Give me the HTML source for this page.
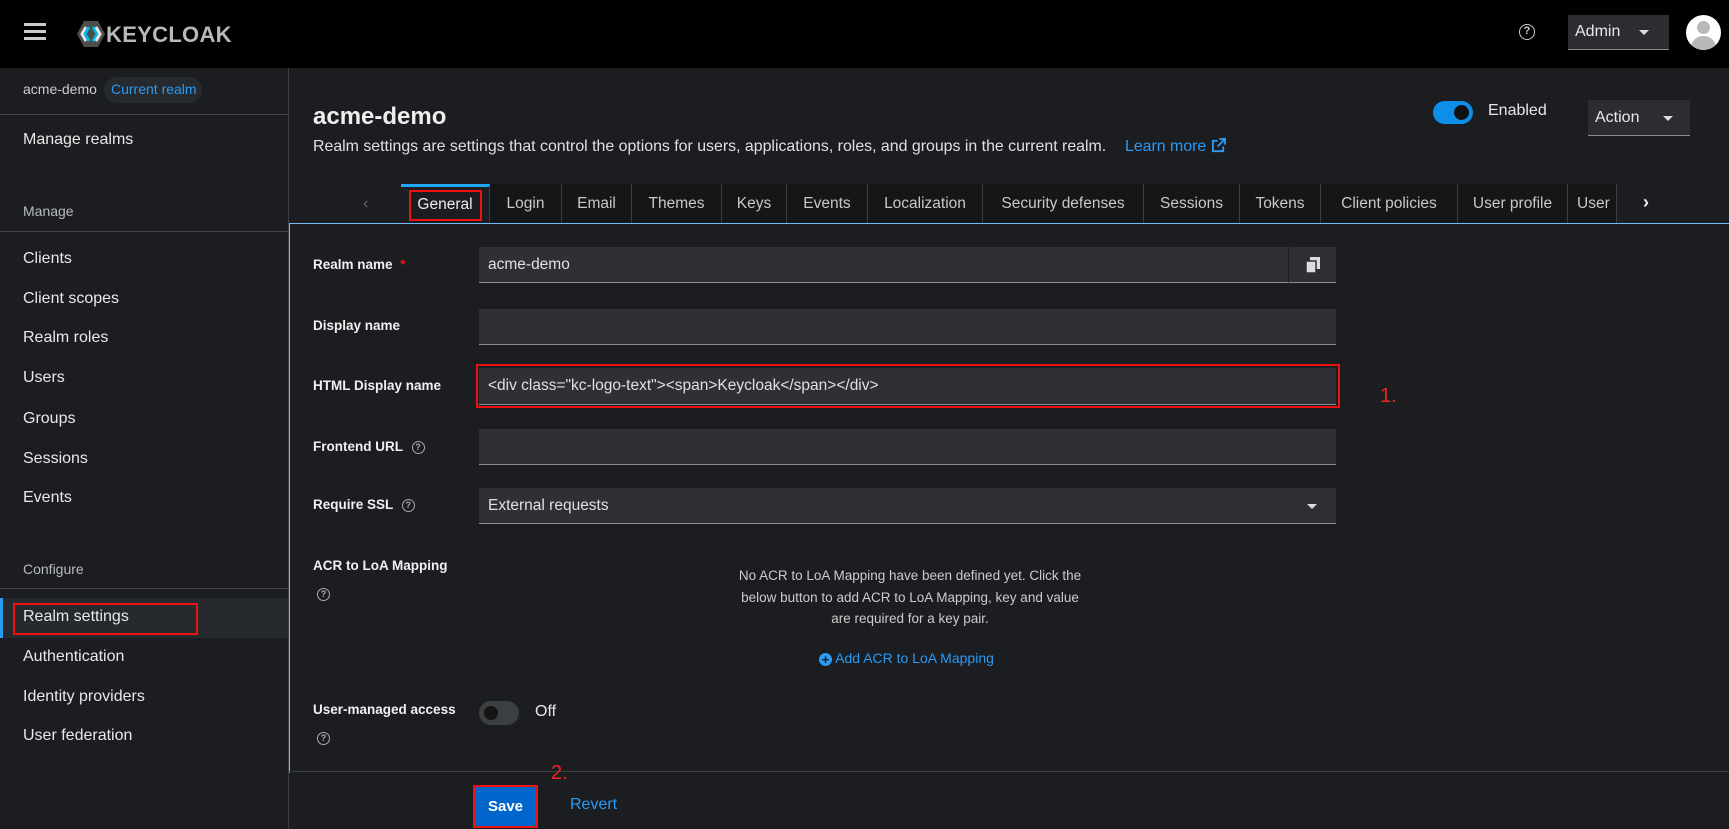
<!DOCTYPE html>
<html><head><meta charset="utf-8"><style>
*{box-sizing:border-box;margin:0;padding:0}
body{width:1729px;height:829px;overflow:hidden;background:#1b1d21;font-family:"Liberation Sans",sans-serif;color:#e0e0e0;position:relative;font-size:15px}
.a{position:absolute;white-space:nowrap}
.hdr{left:0;top:0;width:1729px;height:68px;background:#000}
.side{left:0;top:68px;width:289px;height:761px;background:#1b1d21;border-right:1px solid #3c3f42}
.nav{left:23px;font-size:16px;color:#e8e8e8}
.sec{left:23px;font-size:14px;color:#b8bbbe}
.hr{left:0;width:289px;height:1px;background:#44474b}
.lbl{left:313px;font-size:13.5px;font-weight:bold;color:#f0f0f0}
.inp{left:479px;width:857px;background:#2e3035;border-bottom:1px solid #8a8d90;font-size:15.5px;color:#e0e0e0;padding-left:9px;display:flex;align-items:center}
.tab{top:184px;height:39px;border-right:1px solid #3c3f42;background:#151618;font-size:15.5px;color:#c8c8c8;display:flex;align-items:center;justify-content:center}
.q{display:inline-block;width:13px;height:13px;border:1.5px solid #aaa;border-radius:50%;font-size:9px;line-height:10px;text-align:center;color:#aaa;font-weight:bold;vertical-align:middle}
</style></head><body>
<div class="a hdr"></div>
<div class="a" style="left:24px;top:23px;width:22px;height:3px;background:#ccc;box-shadow:0 7px 0 #ccc,0 14px 0 #ccc"></div>
<svg class="a" style="left:76px;top:20px" width="30" height="28" viewBox="0 0 30 28"><polygon points="8,1 22,1 29,14 22,27 8,27 1,14" fill="#4d4d4d"/><path d="M10 7 L6 14 L10 21" stroke="#e6e6e6" stroke-width="3" fill="none"/><path d="M13 7 L9 14 L13 21" stroke="#00b8e3" stroke-width="3" fill="none"/><path d="M17 7 L21 14 L17 21" stroke="#00b8e3" stroke-width="3" fill="none"/><path d="M20 7 L24 14 L20 21" stroke="#e6e6e6" stroke-width="3" fill="none"/></svg>
<div class="a" style="left:106px;top:22px;font-size:22px;font-weight:bold;color:#b8b8b8;letter-spacing:0.3px">KEYCLOAK</div>
<div class="a" style="left:1519px;top:24px;width:16px;height:16px;border:1.5px solid #ccc;border-radius:50%;font-size:11px;text-align:center;line-height:13px;color:#ccc;font-weight:bold">?</div>
<div class="a" style="left:1568px;top:15px;width:101px;height:35px;background:#2b2d31;border-bottom:1px solid #8a8d90;font-size:16px;color:#e8e8e8;padding:8px 0 0 7px">Admin<span style="position:absolute;left:71px;top:15px;border:5px solid transparent;border-top-color:#ddd"></span></div>
<div class="a" style="left:1686px;top:15px;width:35px;height:35px;border-radius:50%;background:#fff;overflow:hidden"><div style="position:absolute;left:11px;top:6px;width:13px;height:13px;border-radius:50%;background:#b8b8b8"></div><div style="position:absolute;left:5px;top:21px;width:25px;height:20px;border-radius:12px 12px 0 0;background:#b8b8b8"></div></div>

<div class="a side"></div>
<div class="a" style="left:23px;top:81px;font-size:14px;color:#ccc">acme-demo</div>
<div class="a" style="left:104px;top:77px;height:26px;width:98px;border-radius:13px;background:#26292d;color:#2b9af3;font-size:14px;padding:4px 0 0 7px">Current realm</div>
<div class="a hr" style="top:114px"></div>
<div class="a nav" style="top:131px">Manage realms</div>
<div class="a sec" style="top:203px">Manage</div>
<div class="a hr" style="top:231px"></div>
<div class="a nav" style="top:250px">Clients</div>
<div class="a nav" style="top:290px">Client scopes</div>
<div class="a nav" style="top:329px">Realm roles</div>
<div class="a nav" style="top:369px">Users</div>
<div class="a nav" style="top:410px">Groups</div>
<div class="a nav" style="top:450px">Sessions</div>
<div class="a nav" style="top:489px">Events</div>
<div class="a sec" style="top:561px">Configure</div>
<div class="a hr" style="top:588px"></div>
<div class="a" style="left:0;top:598px;width:288px;height:40px;background:#26292d;border-left:3px solid #2b9af3"></div>
<div class="a" style="left:13px;top:603px;width:185px;height:32px;border:2px solid #e11"></div>
<div class="a nav" style="top:608px">Realm settings</div>
<div class="a nav" style="top:648px">Authentication</div>
<div class="a nav" style="top:688px">Identity providers</div>
<div class="a nav" style="top:727px">User federation</div>

<div class="a" style="left:313px;top:103px;font-size:24px;font-weight:bold;color:#eee">acme-demo</div>
<div class="a" style="left:313px;top:138px;font-size:15.9px;color:#e0e0e0">Realm settings are settings that control the options for users, applications, roles, and groups in the current realm.</div>
<div class="a" style="left:1125px;top:138px;font-size:15.9px;color:#2b9af3">Learn more <svg width="15" height="15" viewBox="0 0 16 16" style="vertical-align:-2px"><path d="M7 3H2v11h11V9" stroke="#2b9af3" stroke-width="2" fill="none"/><path d="M9 1h6v6M15 1L7 9" stroke="#2b9af3" stroke-width="2" fill="none"/></svg></div>
<div class="a" style="left:1433px;top:101px;width:40px;height:23px;border-radius:12px;background:#0d8ee8"><div style="position:absolute;right:4px;top:4px;width:15px;height:15px;border-radius:50%;background:#111"></div></div>
<div class="a" style="left:1488px;top:102px;font-size:16px;color:#e8e8e8">Enabled</div>
<div class="a" style="left:1588px;top:100px;width:102px;height:36px;background:#2b2d31;border-bottom:1px solid #8a8d90;font-size:16px;color:#e8e8e8;padding:9px 0 0 7px">Action<span style="position:absolute;left:75px;top:16px;border:5px solid transparent;border-top-color:#ddd"></span></div>

<div class="a" style="left:290px;top:184px;width:1439px;height:39px;background:#1b1d21"></div>
<div class="a" style="left:363px;top:195px;font-size:16px;color:#666">‹</div>
<div class="a tab" style="left:401px;width:89px;border-top:3px solid #1fa7f8;background:#1b1d21;color:#eee">General</div>
<div class="a" style="left:409px;top:190px;width:73px;height:31px;border:2px solid #e11"></div>
<div class="a tab" style="left:490px;width:72px">Login</div>
<div class="a tab" style="left:562px;width:70px">Email</div>
<div class="a tab" style="left:632px;width:90px">Themes</div>
<div class="a tab" style="left:722px;width:65px">Keys</div>
<div class="a tab" style="left:787px;width:81px">Events</div>
<div class="a tab" style="left:868px;width:115px">Localization</div>
<div class="a tab" style="left:983px;width:161px">Security defenses</div>
<div class="a tab" style="left:1144px;width:96px">Sessions</div>
<div class="a tab" style="left:1240px;width:81px">Tokens</div>
<div class="a tab" style="left:1321px;width:137px">Client policies</div>
<div class="a tab" style="left:1458px;width:110px">User profile</div>
<div class="a tab" style="left:1568px;width:49px;justify-content:flex-start;padding-left:9px;overflow:hidden">User</div>
<div class="a" style="left:1643px;top:192px;font-size:18px;color:#eee;font-weight:bold">›</div>

<div class="a" style="left:289px;top:223px;width:1440px;height:550px;border-top:1px solid #73bcf7;border-left:1px solid #73bcf7"></div>

<div class="a lbl" style="top:257px">Realm name <span style="color:#e11;margin-left:4px">*</span></div>
<div class="a inp" style="top:247px;height:36px;width:810px">acme-demo</div>
<div class="a" style="left:1288px;top:247px;width:48px;height:36px;background:#2e3035;border-left:1px solid #1b1d21;border-bottom:1px solid #8a8d90"><svg style="position:absolute;left:17px;top:10px" width="14" height="16" viewBox="0 0 14 16"><rect x="4" y="0" width="10" height="12" fill="#ddd"/><rect x="0" y="4" width="10" height="12" fill="#ddd" stroke="#2e3035" stroke-width="1.5"/></svg></div>
<div class="a lbl" style="top:318px">Display name</div>
<div class="a inp" style="top:309px;height:36px"></div>
<div class="a lbl" style="top:378px">HTML Display name</div>
<div class="a inp" style="top:368px;height:37px">&lt;div class="kc-logo-text"&gt;&lt;span&gt;Keycloak&lt;/span&gt;&lt;/div&gt;</div>
<div class="a" style="left:476px;top:364px;width:864px;height:44px;border:2.5px solid #e11"></div>
<div class="a" style="left:1380px;top:385px;font-size:20px;color:#e22">1.</div>
<div class="a lbl" style="top:439px">Frontend URL <span class="q" style="margin-left:5px">?</span></div>
<div class="a inp" style="top:429px;height:36px"></div>
<div class="a lbl" style="top:497px">Require SSL <span class="q" style="margin-left:5px">?</span></div>
<div class="a inp" style="top:488px;height:36px">External requests<span style="position:absolute;left:828px;top:16px;border:5px solid transparent;border-top-color:#ddd"></span></div>
<div class="a lbl" style="top:558px">ACR to LoA Mapping</div>
<div class="a" style="left:317px;top:585px"><span class="q">?</span></div>
<div class="a" style="left:730px;top:565px;width:360px;text-align:center;white-space:normal;font-size:13.5px;line-height:21.5px;color:#ccc">No ACR to LoA Mapping have been defined yet. Click the below button to add ACR to LoA Mapping, key and value are required for a key pair.</div>
<div class="a" style="left:819px;top:650px;font-size:14px;color:#2b9af3"><span style="display:inline-block;width:13px;height:13px;border-radius:50%;background:#2b9af3;color:#1b1d21;font-size:13px;line-height:13px;text-align:center;font-weight:bold;vertical-align:-1px">+</span> Add ACR to LoA Mapping</div>
<div class="a lbl" style="top:702px">User-managed access</div>
<div class="a" style="left:317px;top:729px"><span class="q">?</span></div>
<div class="a" style="left:479px;top:701px;width:40px;height:24px;border-radius:12px;background:#3c3f42"><div style="position:absolute;left:5px;top:5px;width:14px;height:14px;border-radius:50%;background:#151515"></div></div>
<div class="a" style="left:535px;top:703px;font-size:16px;color:#e8e8e8">Off</div>

<div class="a" style="left:289px;top:771px;width:1440px;height:1px;background:#3c3f42"></div>
<div class="a" style="left:551px;top:762px;font-size:20px;color:#e22">2.</div>
<div class="a" style="left:473px;top:785px;width:65px;height:43px;border:2.5px solid #e11;background:#0066cc;color:#fff;font-size:15px;font-weight:bold;text-align:center;padding-top:11px">Save</div>
<div class="a" style="left:570px;top:796px;font-size:16px;color:#2b9af3">Revert</div>
</body></html>
